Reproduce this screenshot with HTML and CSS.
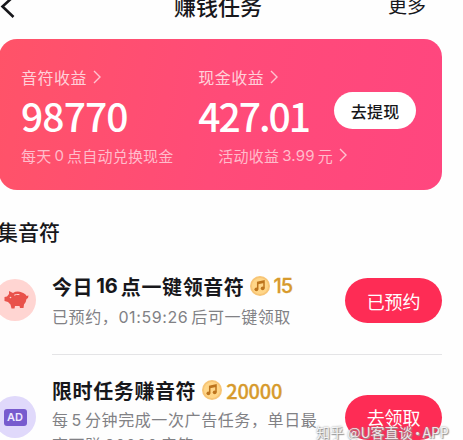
FILE: index.html
```html
<!DOCTYPE html>
<html lang="zh-CN">
<head>
<meta charset="utf-8">
<title>赚钱任务</title>
<link rel="stylesheet" href="styles.css">
</head>
<body>
<header class="nav">
  <svg class="back" width="16" height="24" viewBox="0 0 16 24"><path d="M13.5 1.5L2.5 11.5L13.5 22" fill="none" stroke="#17171b" stroke-width="2.6"/></svg>
  <h1>赚钱任务</h1>
  <span class="more">更多</span>
</header>
<section class="card">
  <div class="coins">
    <div class="label">音符收益<svg width="8" height="14" viewBox="0 0 8 14"><path d="M1 1L7 7L1 13"/></svg></div>
    <div class="amount">98770</div>
    <div class="note">每天<span class="num zero">0</span>点自动兑换现金</div>
  </div>
  <div class="cash">
    <div class="label">现金收益<svg width="8" height="14" viewBox="0 0 8 14"><path d="M1 1L7 7L1 13"/></svg></div>
    <div class="amount decimal">427.01</div>
    <div class="note activity">活动收益<span class="num price">3.99</span>元<svg width="8" height="14" viewBox="0 0 8 14"><path d="M1 1L7 7L1 13"/></svg></div>
  </div>
  <button class="withdraw">去提现</button>
</section>
<h2>集音符</h2>
<section class="task">
  <div class="icon pig">
    <svg width="25" height="20" viewBox="0 0 25 20"><path fill="#e9524b" d="M5 1L9 3Q13 .5 18 2.5Q22 4 22.5 6L24.5 5.5L24 8L22.5 9Q22 13 20 14.5L19.5 18H16L15.5 16H11L10.5 18.5H7.5L6.5 14.5L4 12L.5 11V7L3 6.5L5 4Z"/><path d="M10.5 5Q12.5 4 15 4.5" fill="none" stroke="#ffd5d2" stroke-width="1" stroke-linecap="round"/><circle cx="6.5" cy="7.5" r=".8" fill="#ffd5d2"/></svg>
  </div>
  <div class="body">
    <div class="title">今日<span class="num sixteen">16</span>点一键领音符<svg class="coin" width="20" height="20" viewBox="0 0 20 20"><circle cx="10" cy="10" r="10" fill="#f7c576"/><circle cx="10" cy="10" r="8" fill="#ffd688"/><path d="M7.7 13V6.3L14 5V12" fill="none" stroke="#bd741d" stroke-width="1.5"/><path d="M7.7 7.2L14 6" stroke="#bd741d" stroke-width="2"/><circle cx="6.4" cy="13.3" r="1.9" fill="#bd741d"/><circle cx="12.7" cy="12.3" r="1.9" fill="#bd741d"/></svg><span class="reward small">15</span></div>
    <div class="desc">已预约，<span class="num time">01:59:26</span>后可一键领取</div>
  </div>
  <button class="action">已预约</button>
</section>
<section class="task second">
  <div class="icon ad"><span>AD</span></div>
  <div class="body">
    <div class="title">限时任务赚音符<svg class="coin" width="20" height="20" viewBox="0 0 20 20"><circle cx="10" cy="10" r="10" fill="#f7c576"/><circle cx="10" cy="10" r="8" fill="#ffd688"/><path d="M7.7 13V6.3L14 5V12" fill="none" stroke="#bd741d" stroke-width="1.5"/><path d="M7.7 7.2L14 6" stroke="#bd741d" stroke-width="2"/><circle cx="6.4" cy="13.3" r="1.9" fill="#bd741d"/><circle cx="12.7" cy="12.3" r="1.9" fill="#bd741d"/></svg><span class="reward">20000</span></div>
    <div class="desc">每<span class="num five">5</span>分钟完成一次广告任务，单日最<br>高可赚<span class="num total">20000</span>音符</div>
  </div>
  <button class="action">去领取</button>
</section>
<div class="watermark">知乎 @U客直谈<span>·</span>APP</div>
</body>
</html>
```

FILE: styles.css
```css
* { box-sizing: border-box; }
html, body { height: 440px; overflow: hidden; }
body {
  margin: 0;
  position: relative;
  background: #fefefe;
  color: #17171b;
  font-family: "Noto Sans CJK SC", sans-serif;
}
h1, h2 { margin: 0; }
svg { flex: none; }
button {
  border: 0;
  padding: 0;
  font-family: inherit;
  white-space: nowrap;
}
.num { font-family: Inter, "Noto Sans CJK SC", sans-serif; }

.nav {
  height: 39px;
  display: grid;
  grid-template-columns: 174px 214px auto;
  align-items: start;
}
.back { margin-top: -5px; }
.nav h1 {
  margin-top: -11px;
  font-size: 22px;
  line-height: 32px;
  font-weight: 500;
}
.more { margin-top: -10px; font-size: 19px; line-height: 30px; }

.card {
  width: 443px;
  height: 151px;
  margin-left: -1px;
  padding: 27px 26px 0 22px;
  display: flex;
  border-radius: 18px;
  background: linear-gradient(100deg, #ff5368 0%, #ff4b78 50%, #ff467f 100%);
  color: #fff;
  white-space: nowrap;
}
.card svg path { fill: none; stroke: #ffc3d0; stroke-width: 1.4; }
.coins { width: 178px; }
.cash { width: 136px; }
.label {
  display: flex;
  align-items: center;
  gap: 6px;
  height: 22px;
  font-size: 16px;
  letter-spacing: .5px;
  color: #ffd0d9;
}
.amount {
  height: 55px;
  font-size: 39px;
  line-height: 54px;
  font-weight: 500;
  letter-spacing: -.9px;
}
.decimal { letter-spacing: -2px; }
.note {
  display: flex;
  align-items: center;
  height: 24px;
  font-size: 15px;
  letter-spacing: .2px;
  color: #ffbccb;
}
.zero { margin: 0 3px; }
.activity { padding-left: 20px; }
.price { margin: 0 3px; }
.activity svg { margin-left: 6px; }
.withdraw {
  width: 82px;
  height: 37px;
  margin-top: 26px;
  border-radius: 19px;
  background: #fff;
  color: #17171b;
  font-size: 16px;
  font-weight: 500;
  letter-spacing: .3px;
}

h2 {
  margin: 26px 0 0 -3px;
  font-size: 21px;
  line-height: 30px;
  font-weight: 500;
}

.task {
  height: 104px;
  margin-top: 5px;
  display: grid;
  grid-template-columns: 52px 293px 97px;
  padding-top: 21px;
  white-space: nowrap;
}
.icon {
  width: 42px;
  height: 42px;
  margin: 7px 0 0 -6px;
  border-radius: 50%;
  display: grid;
  place-items: center;
}
.pig { background: #ffd5d2; padding-left: 2px; }
.ad { background: #e0d9fb; }
.ad span {
  width: 23px;
  height: 17px;
  border-radius: 3px;
  background: #775bce;
  color: #eee9ff;
  font: 600 11px/17px Inter, sans-serif;
  text-align: center;
}
.body {
  width: 390px;
  height: 83px;
  border-bottom: 1px solid #e4e4e6;
}
.title {
  display: flex;
  align-items: center;
  height: 28px;
  font-size: 20px;
  letter-spacing: .6px;
  font-weight: 700;
}
.sixteen { margin: 0 3px; letter-spacing: 0; }
.coin { margin: 0 4px 0 6px; }
.reward {
  color: #d79a2c;
  font-weight: 500;
  letter-spacing: -.2px;
  -webkit-text-stroke: .3px #d79a2c;
}
.small { margin-left: -1px; font-family: Inter, sans-serif; letter-spacing: -1px; }
.desc {
  margin-top: 4px;
  font-size: 16px;
  line-height: 25px;
  letter-spacing: .6px;
  color: #818185;
}
.time { margin-right: 3px; }
.five { margin: 0 3px; }
.total { margin: 0 3px; }
.action {
  z-index: 1;
  width: 97px;
  height: 45px;
  margin-top: 6px;
  border-radius: 23px;
  background: #fe2c55;
  color: #fff;
  font-size: 18px;
  letter-spacing: -.2px;
}
.second { margin-top: 1px; padding-top: 20px; }
.second .icon { margin-top: 20px; }
.second .body { border: 0; }
.second .desc { margin-top: 3px; line-height: 24px; }
.second .action { margin-top: 19px; padding-bottom: 1px; }
.watermark {
  position: absolute;
  z-index: 2;
  left: 316px;
  top: 422px;
  font-size: 14px;
  line-height: 20px;
  white-space: nowrap;
  color: rgba(255, 255, 255, .85);
  text-shadow: 0 0 2px #888, 1px 1px 1px #999;
}
.watermark span { margin: 0 -2px; }
```
